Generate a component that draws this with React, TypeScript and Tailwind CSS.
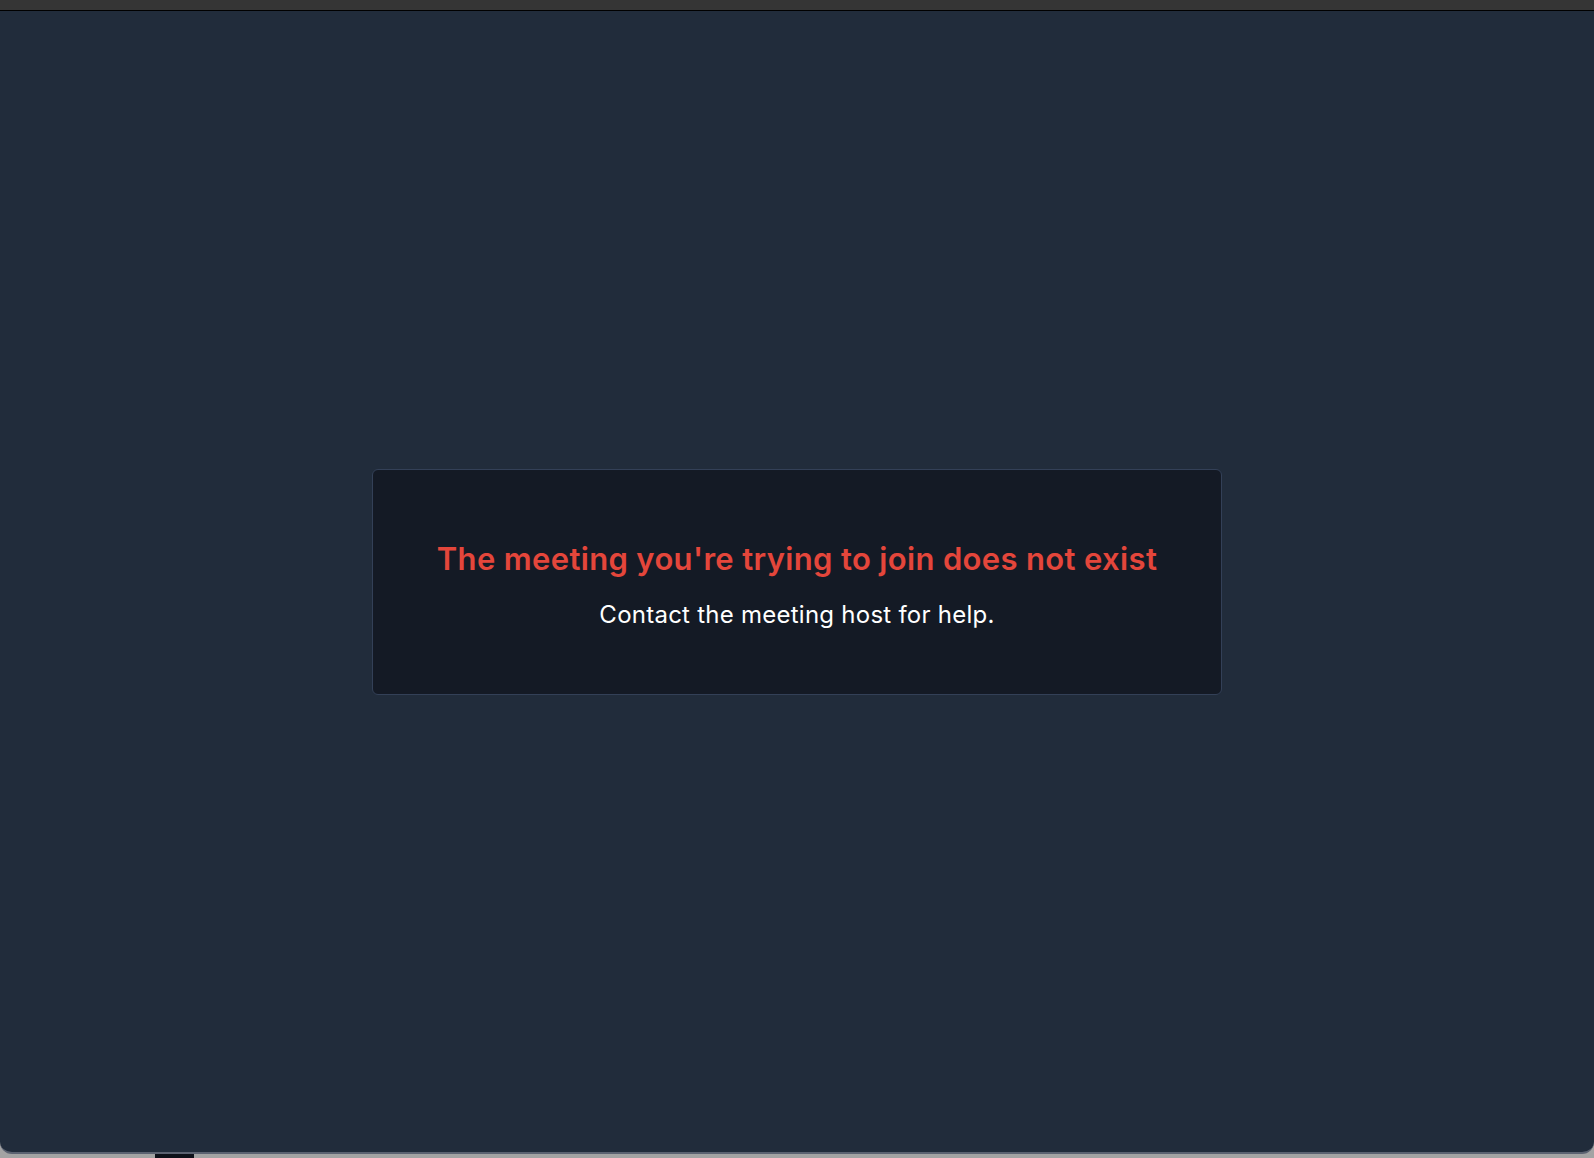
export default function App() {
  return (
    <div
      className="flex h-[1158px] w-full flex-col overflow-hidden bg-[#a3a3a3]"
      style={{ fontFamily: "Inter, 'Noto Sans', sans-serif" }}
    >
      <div className="h-[11px] shrink-0 border-b border-black bg-[#353535]" />

      <main className="flex h-[1143px] shrink-0 items-center justify-center rounded-b-[12px] border-b-2 border-[#5b6271] bg-[#212c3b]">
        <div className="flex h-[226px] w-[850px] flex-col items-center justify-center rounded-md border border-[#334057] bg-[#141a25] pt-[6px]">
          <h1 className="text-[31px] leading-[40px] font-semibold tracking-[0.35px] text-[#e4463b]">
            The meeting you&apos;re trying to join does not exist
          </h1>
          <p className="mt-[20px] text-[24px] leading-[32px] tracking-[0.25px] text-white">
            Contact the meeting host for help.
          </p>
        </div>
      </main>

      <div className="flex flex-1">
        <div className="ml-[155px] h-full w-[39px] bg-[#0e1119]" />
      </div>
    </div>
  );
}
